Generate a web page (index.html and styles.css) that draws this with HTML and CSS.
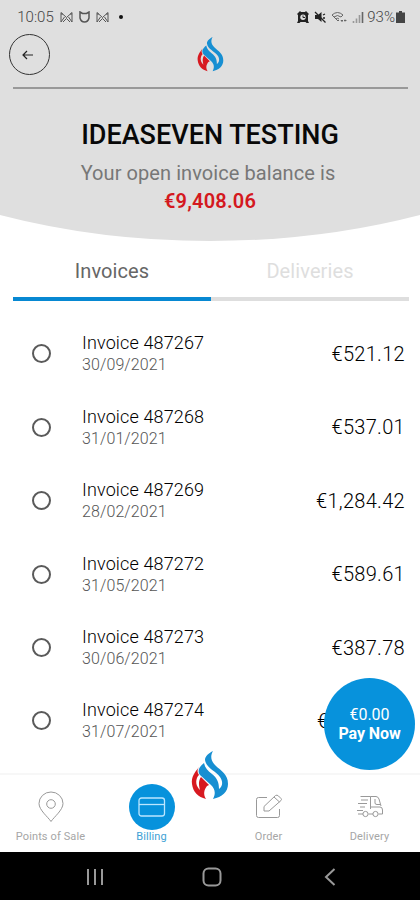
FILE: index.html
```html
<!DOCTYPE html>
<html lang="en">
<head>
<meta charset="utf-8">
<title>Billing</title>
<link rel="stylesheet" href="styles.css">
</head>
<body>
<svg width="0" height="0" class="defs">
  <symbol id="flame" viewBox="0 0 38 49">
    <path class="logo-blue" d="M22 0C19 5 20 10 24 14C30 20 37 23 37 33C37 41 31 46 22 48C25 42 24 38 20 34L9 24C6 20 8 16 13 12C14 17 17 20 21 23C26 27 28 31 28 38C32 35 32 30 29 26C25 20 15 17 14 9C14 5 18 2 22 0Z"/>
    <path class="logo-red" d="M8 16C4 21 0 26 1 33C2 41 7 46 15 48C12 43 13 39 16 35L18 34L10 26C7 30 8 35 9 39C5 35 4 30 7 25L8 24C6 21 6 19 8 16Z"/>
  </symbol>
  <symbol id="mail" viewBox="0 0 13 12"><path d="M1 11V1.500L6.500 6.500L12 1.500V11M1 11L4.500 6M12 11L8.500 6M3 11L6.500 7.500L10 11M1 3H3M10 3H12"/></symbol>
</svg>
<div class="phone">
  <header class="hero">
    <svg class="curve" viewBox="0 0 420 241" preserveAspectRatio="none"><path d="M0 0H420V215Q320 241 210 241Q100 241 0 215Z"/></svg>
    <div class="status">
      <div class="status-left">
        <span class="clock">10:05</span>
        <svg class="ic" width="13" height="12"><use href="#mail"/></svg>
        <svg class="ic" width="11" height="12" viewBox="0 0 11 12"><path d="M1 1L3.500 2.500H7.500L10 1V7Q9 11 5.500 11Q2 11 1 7Z" stroke-width="1.500"/></svg>
        <svg class="ic" width="13" height="12"><use href="#mail"/></svg>
        <i class="dot"></i>
      </div>
      <div class="status-right">
        <svg width="12" height="12" viewBox="0 0 12 12"><path d="M0 3L3 0L4 1H8L9 0L12 3L11 4V10L12 12H9.500L8.500 11H3.500L2.500 12H0L1 10V4Z" fill="#222"/><circle cx="6" cy="6.300" r="2.700" fill="#ddd"/><path d="M6 4.500V6.500H8" stroke="#222" fill="none"/></svg>
        <svg width="12" height="12" viewBox="0 0 12 12"><path d="M1 4H4L7.500 1V11L4 8H1Z" fill="#222"/><path d="M1 1L11.500 11.500M9 4L11 3M9 7H11" stroke="#222" stroke-width="1.300"/></svg>
        <svg width="16" height="12" viewBox="0 0 16 12"><path d="M1 4Q6.500-1 12 4M3 6Q6.500 3 10 6M5 8Q6.500 6.500 8 8M1 4L7 10L8 9M12 4L10 6M10 9.500L11.500 11M10 9.500H12M13 9.500H15M14 8.500L15 9.500L14 10.500" stroke="#666" fill="none"/></svg>
        <svg width="12" height="12" viewBox="0 0 12 12"><path d="M1.500 10V12M4.500 7.500V12M7.500 4V12" stroke="#999" stroke-width="1.600"/><path d="M10.500 1V12" stroke="#666" stroke-width="1.600"/></svg>
        <span class="pct">93%</span>
        <svg width="9" height="12" viewBox="0 0 9 12"><path d="M0 1.500H3V0H6V1.500H9V12H0Z" fill="#444"/></svg>
      </div>
    </div>
    <div class="topbar">
      <div class="back"><svg width="12" height="10" viewBox="0 0 12 10"><path d="M5 1L1 5L5 9M1 5H11"/></svg></div>
      <svg class="logo-small" width="27" height="35"><use href="#flame"/></svg>
    </div>
    <h1>IDEASEVEN TESTING</h1>
    <p class="lead">Your open invoice balance is</p>
    <p class="total">€9,408.06</p>
  </header>
  <nav class="tabs"><div class="tab active">Invoices</div><div class="tab">Deliveries</div></nav>
  <main class="list">
    <div class="row"><i class="radio"></i><div class="info"><b>Invoice 487267</b><small>30/09/2021</small></div><span class="amount">€521.12</span></div>
    <div class="row"><i class="radio"></i><div class="info"><b>Invoice 487268</b><small>31/01/2021</small></div><span class="amount">€537.01</span></div>
    <div class="row"><i class="radio"></i><div class="info"><b>Invoice 487269</b><small>28/02/2021</small></div><span class="amount">€1,284.42</span></div>
    <div class="row"><i class="radio"></i><div class="info"><b>Invoice 487272</b><small>31/05/2021</small></div><span class="amount">€589.61</span></div>
    <div class="row"><i class="radio"></i><div class="info"><b>Invoice 487273</b><small>30/06/2021</small></div><span class="amount">€387.78</span></div>
    <div class="row"><i class="radio"></i><div class="info"><b>Invoice 487274</b><small>31/07/2021</small></div><span class="amount covered">€</span></div>
  </main>
  <div class="pay"><span>€0.00</span><strong>Pay Now</strong></div>
  <footer class="bottom">
    <div class="item"><div class="pic"><svg width="26" height="32" viewBox="0 0 26 32"><path d="M13 30.500C10 26 1 19 1 12.500A12 11.500 0 0 1 25 12.500C25 19 16 26 13 30.500Z"/><circle cx="13" cy="13" r="4.300"/></svg></div><span>Points of Sale</span></div>
    <div class="item on"><div class="pic"><svg width="28" height="20" viewBox="0 0 28 20"><rect x="1" y="1" width="25.500" height="18" rx="2.500"/><path d="M1 7.500H26.500"/></svg></div><span>Billing</span></div>
    <div class="item mid"><svg width="38" height="49"><use href="#flame"/></svg></div>
    <div class="item"><div class="pic"><svg width="28" height="26" viewBox="0 0 28 26"><path d="M12 3.500H3.500Q1.500 3.500 1.500 5.500V21.500Q1.500 23.500 3.500 23.500H22.500Q24.500 23.500 24.500 21.500V15M9 17V12.500L20.500 1.500Q22 .5 23.500 2L26 4.500Q27 5.500 26 6.500L14 17ZM19 3L24.500 8"/></svg></div><span>Order</span></div>
    <div class="item"><div class="pic"><svg width="28" height="26" viewBox="0 0 28 26"><path d="M4.500 2.500H14.500V15M14.500 2.500H20Q22 2.500 23 5L25 12M14.500 13H24Q26.500 13 26.500 16V20H22.500M17 20H12.500M7 20H2M5 6H12M2 9.500H11M4 13H9M1 16.500H7M19 5V9Q19 10.500 21 10.500H24.500"/><circle cx="9.500" cy="20" r="2.600"/><circle cx="19.500" cy="20" r="2.600"/></svg></div><span>Delivery</span></div>
  </footer>
  <div class="system">
    <svg width="18" height="18" viewBox="0 0 18 18"><path d="M2 1V17M9 1V17M16 1V17"/></svg>
    <svg width="20" height="20" viewBox="0 0 20 20"><rect x="1.500" y="1.500" width="17" height="17" rx="5"/></svg>
    <svg width="12" height="18" viewBox="0 0 12 18"><path d="M10.500 1L2 9L10.500 17"/></svg>
  </div>
</div>
</body>
</html>
```
FILE: styles.css
```css
* { box-sizing: border-box; }
body { margin: 0; background: #fff; font-family: Roboto, sans-serif; }
svg { display: block; flex: none; }
.defs { position: absolute; }
.phone { position: relative; width: 420px; height: 900px; overflow: hidden; display: flex; flex-direction: column; }
.hero { position: relative; height: 241px; text-align: center; flex: none; }
.curve { position: absolute; inset: 0; width: 420px; height: 241px; z-index: -1; fill: #dfdfdf; }
.logo-blue { fill: #178fd2; }
.logo-red { fill: #d71920; }
.status { height: 33px; padding: 0 15px 0 17px; display: flex; justify-content: space-between; align-items: center; color: #555; font-size: 14.500px; }
.status-left, .status-right { display: flex; align-items: center; }
.status-left { gap: 6px; }
.status-right { gap: 5px; }
.clock { width: 37px; font-weight: 300; font-size: 15px; color: #444; }
.pct { margin: 0 -4px 0 -2px; font-weight: 300; font-size: 15px; color: #444; }
.ic { fill: none; stroke: #555; }
.dot { width: 4px; height: 4px; margin-left: 4px; border-radius: 50%; background: #111; }
.topbar { height: 56px; margin: 0 12px 0 13px; border-bottom: 2px solid #999; display: flex; align-items: flex-start; }
.back { width: 41px; height: 41px; margin: 1px 0 0 -4px; border: 1px solid #333; border-radius: 50%; display: grid; place-items: center; }
.back svg { fill: none; stroke: #222; stroke-width: 1.200; margin-left: -3px; }
.logo-small { margin: 4px 0 0 147px; }
h1 { margin: 29px 0 0; font-size: 27px; line-height: 34px; font-weight: 500; letter-spacing: 0; color: #080808; }
p { margin: 0; }
.lead { margin-top: 7px; font-size: 20px; line-height: 28px; color: #777; letter-spacing: .07px; padding-right: 4px; }
.total { font-size: 20px; line-height: 28px; font-weight: 600; color: #d41820; letter-spacing: .2px; }
.tabs { flex: none; margin: 8px 11px 0 13px; height: 52px; display: grid; grid-template-columns: 1fr 1fr; }
.tab { border-bottom: 4px solid #dedede; text-align: center; font-size: 20px; line-height: 45px; color: #dedede; letter-spacing: .1px; }
.tab.active { border-color: #0788d2; color: #666; }
.list { flex: none; height: 472px; padding-top: 16.300px; }
.row { height: 73.400px; padding: 0 15px 0 32px; display: flex; align-items: center; }
.radio { width: 19px; height: 19px; border: 2px solid #5a5a5a; border-radius: 50%; margin-right: 31px; }
.info { display: flex; flex-direction: column; flex: 1; }
.info b { font-size: 18px; line-height: 22px; font-weight: 300; letter-spacing: .14px; color: #000; }
.info small { font-size: 16px; line-height: 21px; font-weight: 300; color: #555; letter-spacing: .1px; }
.amount { font-size: 20px; font-weight: 300; color: #000; letter-spacing: .3px; }
.covered { width: 88px; }
.pay { position: absolute; left: 324px; top: 678px; width: 91px; height: 92px; border-radius: 50%; background: #0792dc; color: #fff; display: flex; flex-direction: column; align-items: center; justify-content: center; font-size: 16px; line-height: 19px; }
.pay strong { font-weight: 700; letter-spacing: -.1px; }
.bottom { height: 79px; flex: none; display: flex; padding: 9px 0 0; border-top: 2px solid #f7f7f7; }
.item { width: 101px; display: flex; flex-direction: column; align-items: center; font-size: 11px; line-height: 13px; color: #a6a6a6; letter-spacing: .12px; }
.item.mid { width: 16px; overflow: visible; margin-top: -33px; }
.pic { width: 46px; height: 46px; border-radius: 50%; display: grid; place-items: center; }
.pic svg { fill: none; stroke: #999; stroke-width: 1; }
.on { color: #3e9fd5; }
.on .pic { background: #0792dc; }
.on .pic svg { stroke: #bce6ff; stroke-width: 1.300; }
.system { flex: none; height: 48px; background: #000; display: flex; align-items: center; padding: 2px 0 0 86px; }
.system svg { fill: none; stroke: #999; stroke-width: 2; }
.system svg:nth-child(2) { margin-left: 98px; }
.system svg:nth-child(3) { margin-left: 102px; }
```
